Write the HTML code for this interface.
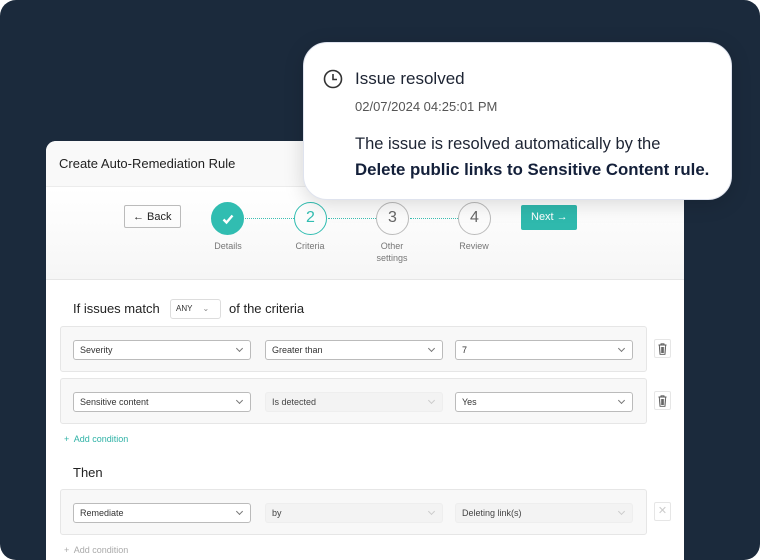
<!DOCTYPE html>
<html><head><style>
*{box-sizing:border-box;margin:0;padding:0}
html,body{width:760px;height:560px;background:#fff;overflow:hidden}
body{font-family:"Liberation Sans",sans-serif;position:relative}
#bg{position:absolute;left:0;top:0;width:760px;height:560px;background:#1b2a3c;border-radius:16px}
#card{position:absolute;left:46px;top:141px;width:638px;height:430px;background:#fff;border-radius:10px 10px 0 0;overflow:hidden}
#hdr{height:46px;background:#f9f9f9;border-bottom:1px solid #ececec;padding:15px 13px;font-size:13px;color:#222}
#step{position:absolute;top:47px;left:0;width:638px;height:92px;background:linear-gradient(#fff,#f6f6f6);border-bottom:1px solid #e6e6e6}
.abs{position:absolute}
.back{left:78px;top:17px;width:57px;height:23px;border:1px solid #bbb;border-radius:2px;font-size:11px;color:#222;padding:5px 0 0 8px}
.circ{width:33px;height:33px;border-radius:50%;border:1.5px solid #bbb;text-align:center;line-height:30px;font-size:16px;color:#666;top:14px}
.lbl{font-size:9px;color:#777;text-align:center;width:60px;top:52px;line-height:12px}
.dot{top:30px;height:0;border-top:1.5px dotted #3dbfb3}
.next{left:475px;top:17px;width:56px;height:25px;background:#2fb9ad;border-radius:2px;color:#fff;font-size:11px;padding:6px 0 0 10px}
.row{position:absolute;left:14px;width:587px;height:46px;background:#f8f8f8;border:1px solid #e6e6e6;border-radius:3px}
.sel{position:absolute;top:13px;width:178px;height:20px;border:1px solid #bbb;border-radius:3px;background:#fff;font-size:9px;color:#333;padding:4px 6px}
.sel.dis{border-color:#eee;background:#f3f3f3;color:#444}
.sel:after{content:"";position:absolute;right:8px;top:5px;width:4px;height:4px;border-right:1px solid #777;border-bottom:1px solid #777;transform:rotate(45deg)}
.sel.dis:after{border-color:#ccc}
.ic{position:absolute;left:608px;width:17px;height:19px;border:1px solid #e6e6e6;border-radius:2px;background:#fff;text-align:center;font-size:11px;color:#555;line-height:17px}
#pop{position:absolute;left:303px;top:42px;width:429px;height:158px;background:#fff;border-radius:24px;border:1px solid #dfe3ee;box-shadow:0 4px 20px rgba(0,0,0,.15)}
</style></head><body>
<div id="bg"></div>
<div id="card">
<div id="hdr">Create Auto-Remediation Rule</div>
<div id="step">
<div class="abs back">&larr; Back</div>
<div class="abs circ" style="left:165px;background:#31bdb1;border-color:#31bdb1;color:#fff">
<svg width="14" height="14" viewBox="0 0 14 14" style="margin-top:9px"><path d="M2.5 7.5L5.5 10.5L11.5 3.5" fill="none" stroke="#fff" stroke-width="2.4"/></svg></div>
<div class="abs dot" style="left:199px;width:49px"></div>
<div class="abs circ" style="left:248px;border-color:#31bdb1;color:#31bdb1">2</div>
<div class="abs dot" style="left:282px;width:48px"></div>
<div class="abs circ" style="left:330px">3</div>
<div class="abs dot" style="left:364px;width:48px"></div>
<div class="abs circ" style="left:412px">4</div>
<div class="abs lbl" style="left:152px">Details</div>
<div class="abs lbl" style="left:234px">Criteria</div>
<div class="abs lbl" style="left:316px">Other<br>settings</div>
<div class="abs lbl" style="left:398px">Review</div>
<div class="abs next">Next &rarr;</div>
</div>
<div class="abs" style="left:27px;top:160px;font-size:13px;color:#222">If issues match</div>
<div class="abs" style="left:124px;top:158px;width:51px;height:20px;border:1px solid #ddd;border-radius:3px;font-size:8px;color:#333;padding:4px 5px">ANY <span style="margin-left:8px;color:#888">&#8964;</span></div>
<div class="abs" style="left:183px;top:160px;font-size:13px;color:#222">of the criteria</div>
<div class="row" style="top:185px"><div class="sel" style="left:12px">Severity</div><div class="sel" style="left:204px">Greater than</div><div class="sel" style="left:394px">7</div></div>
<div class="ic" style="top:198px"><svg width="9" height="12" viewBox="0 0 9 12" style="margin-top:3px"><path d="M0.5 2H8.5M3 2V0.8H6V2M1.3 2.5L2 11.3H7L7.7 2.5M3.3 4V10M4.5 4V10M5.7 4V10" fill="none" stroke="#555" stroke-width="0.9"/></svg></div>
<div class="row" style="top:237px"><div class="sel" style="left:12px">Sensitive content</div><div class="sel dis" style="left:204px">Is detected</div><div class="sel" style="left:394px">Yes</div></div>
<div class="ic" style="top:250px"><svg width="9" height="12" viewBox="0 0 9 12" style="margin-top:3px"><path d="M0.5 2H8.5M3 2V0.8H6V2M1.3 2.5L2 11.3H7L7.7 2.5M3.3 4V10M4.5 4V10M5.7 4V10" fill="none" stroke="#555" stroke-width="0.9"/></svg></div>
<div class="abs" style="left:18px;top:293px;font-size:9px;color:#2fb2a6">+&nbsp; Add condition</div>
<div class="abs" style="left:27px;top:324px;font-size:13px;color:#222">Then</div>
<div class="row" style="top:348px"><div class="sel" style="left:12px">Remediate</div><div class="sel dis" style="left:204px">by</div><div class="sel dis" style="left:394px">Deleting link(s)</div></div>
<div class="ic" style="top:361px;color:#ccc">&#10005;</div>
<div class="abs" style="left:18px;top:404px;font-size:9px;color:#aaa">+&nbsp; Add condition</div>
</div>
<div id="pop">
<svg class="abs" style="left:19px;top:26px" width="20" height="20" viewBox="0 0 20 20"><circle cx="10" cy="10" r="8.5" fill="none" stroke="#333" stroke-width="1.6"/><path d="M10 5V10.5H14" fill="none" stroke="#333" stroke-width="1.6"/></svg>
<div class="abs" style="left:51px;top:26px;font-size:17px;color:#1d2433">Issue resolved</div>
<div class="abs" style="left:51px;top:56px;font-size:13px;color:#555">02/07/2024 04:25:01 PM</div>
<div class="abs" style="left:51px;top:88px;font-size:16.5px;color:#1d2433;line-height:26px;white-space:nowrap">The issue is resolved automatically by the<br><b style="color:#14203a;font-size:16.8px">Delete public links to Sensitive Content rule.</b></div>
</div>
</body></html>
